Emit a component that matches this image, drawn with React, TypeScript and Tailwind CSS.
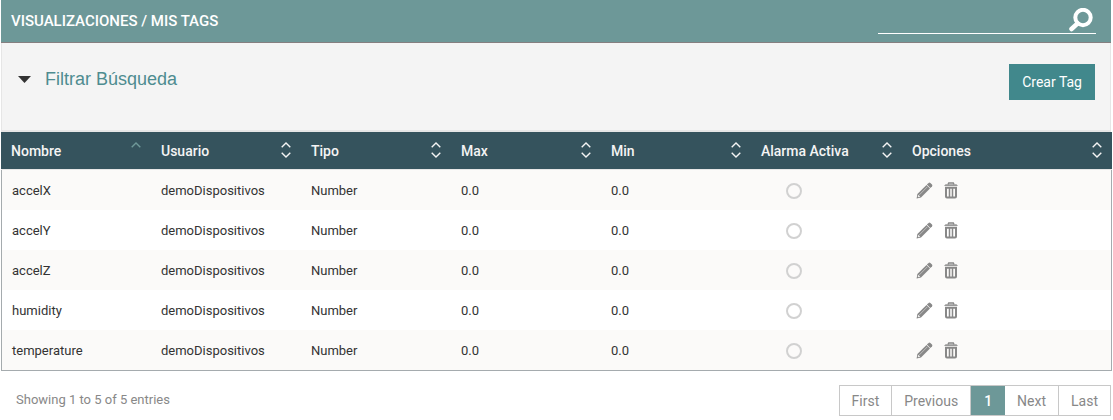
import { useState } from "react";

type Tag = { name: string; user: string; type: string; max: string; min: string };

const columns = ["Nombre", "Usuario", "Tipo", "Max", "Min", "Alarma Activa", "Opciones"];

const tags: Tag[] = ["accelX", "accelY", "accelZ", "humidity", "temperature"].map((name) => ({
  name,
  user: "demoDispositivos",
  type: "Number",
  max: "0.0",
  min: "0.0",
}));

function SearchIcon() {
  return (
    <svg viewBox="0 0 24 24" className="size-6" fill="none" stroke="currentColor" aria-hidden="true">
      <circle cx="14" cy="9.5" r="7.7" strokeWidth="4" />
      <path d="M8.5 15.5 2.5 21" strokeWidth="4.5" strokeLinecap="round" />
    </svg>
  );
}

function SortIcon({ ascending }: { ascending: boolean }) {
  return (
    <svg viewBox="0 0 10 18" className="h-[18px] w-[10px]" fill="none" strokeWidth="1.4" aria-hidden="true">
      <path d="M0.7 5.3 5 1l4.3 4.3" stroke={ascending ? "#6f9999" : "#f4f4f4"} />
      {!ascending && <path d="M0.7 10.7 5 15l4.3-4.3" stroke="#f4f4f4" />}
    </svg>
  );
}

function PencilIcon() {
  return (
    <svg viewBox="0 0 17 17" className="size-[17px]" fill="#888" aria-hidden="true">
      <path d="M0.6 16.4 1.4 12 10.5 3 14 6.5 5 15.6Z" />
      <path d="m10.9 2.6 1.7-1.7q.9-.7 1.8.1l1.6 1.6q.8.9 0 1.8l-1.7 1.7Z" />
      <path d="M3.3 12.9 11.5 4.7" stroke="#bdbdbd" strokeWidth="1" />
      <path d="m2.3 12.8 1.9 1.9-1.8.6-.7-.7Z" fill="#eee" />
    </svg>
  );
}

function TrashIcon() {
  return (
    <svg viewBox="0 0 14 17" className="h-[17px] w-[14px]" fill="none" stroke="#888" aria-hidden="true">
      <path d="M4 2.6 4.7 1h4.6l.7 1.6" strokeWidth="1.4" />
      <path d="M0 4 1.5 2.3h11L14 4Z" fill="#999" stroke="none" />
      <path d="M2 5.8v8.7q0 1 1 1h8q1 0 1-1V5.800Z" strokeWidth="2" />
      <path d="M5.5 6v9M8.5 6v9" strokeWidth="1.5" />
    </svg>
  );
}

export default function App() {
  const [query, setQuery] = useState("");
  const cell = "px-[10px] pt-[2px] pb-0";
  const iconCell = "px-[10px] py-0";
  const page = "h-full border-r border-[#c8c8c8] px-3 text-[#888]";

  return (
    <main className="bg-white px-px font-['Roboto',sans-serif] text-[13px] leading-5 text-[#333]">
      <header className="mr-px flex h-[43px] items-center justify-between border-b border-[#857f80] bg-[#6d9898] pr-[15px] pl-[10px] text-white">
        <h1 className="text-[15px] font-medium">VISUALIZACIONES / MIS TAGS</h1>
        <form className="flex h-[26px] w-[218px] items-center border-b border-white pr-[3px] pb-px" onSubmit={(e) => e.preventDefault()}>
          <input
            aria-label="Buscar"
            className="min-w-0 flex-1 bg-transparent px-1 outline-none"
            value={query}
            onChange={(e) => setQuery(e.target.value)}
          />
          <button type="submit" aria-label="Buscar">
            <SearchIcon />
          </button>
        </form>
      </header>

      <section className="mr-px flex h-[89px] items-start justify-between border-x border-b-2 border-[#e6e6e6] bg-[#f4f4f4] pt-[21px] pr-[15px] pl-4">
        <button type="button" className="flex h-[30px] items-center gap-[14px] font-['Liberation_Sans',sans-serif] text-lg text-[#4e8c90]">
          <svg viewBox="0 0 13 7" className="h-[7px] w-[13px]" fill="#333" aria-hidden="true">
            <path d="M0 0h13L6.5 7Z" />
          </svg>
          Filtrar Búsqueda
        </button>
        <button type="button" className="h-9 bg-[#41888c] px-[13px] text-sm text-white">
          Crear Tag
        </button>
      </section>

      <table className="w-full table-fixed border-separate border-spacing-0 text-left">
        <colgroup>
          <col className="w-[13.5%]" />
          <col className="w-[13.5%]" />
          <col className="w-[13.5%]" />
          <col className="w-[13.5%]" />
          <col className="w-[13.5%]" />
          <col className="w-[13.6%]" />
          <col />
        </colgroup>
        <thead>
          <tr className="h-[38px] bg-[#35535d] text-[#f4f4f4]">
            {columns.map((label, i) => (
              <th key={label} aria-sort={i === 0 ? "ascending" : "none"} className="border-b border-[#e6e6e6] px-[10px] py-0 text-sm font-medium">
                <button type="button" className="flex w-full items-center justify-between">
                  {label}
                  <SortIcon ascending={i === 0} />
                </button>
              </th>
            ))}
          </tr>
        </thead>
        <tbody>
          {tags.map((tag, i) => (
            <tr
              key={tag.name}
              className="h-10 last:h-[41px] odd:bg-[#fbfaf9] [&>td:first-child]:border-l [&>td:last-child]:border-r last:[&>td]:border-b [&>td]:border-[#a5abae]"
            >
              <td className={cell}>{tag.name}</td>
              <td className={cell}>{tag.user}</td>
              <td className={cell}>{tag.type}</td>
              <td className={cell}>{tag.max}</td>
              <td className={cell}>{tag.min}</td>
              <td className={cell}>
                <input
                  type="radio"
                  name={`alarm-${i}`}
                  aria-label={`Alarma activa ${tag.name}`}
                  className="ml-[25px] block size-4 appearance-none rounded-full border-2 border-[#d1d1d1] checked:bg-[#6d9898]"
                />
              </td>
              <td className={iconCell}>
                <div className="flex items-center gap-[11px] pl-1">
                  <button type="button" aria-label={`Editar ${tag.name}`}>
                    <PencilIcon />
                  </button>
                  <button type="button" aria-label={`Eliminar ${tag.name}`}>
                    <TrashIcon />
                  </button>
                </div>
              </td>
            </tr>
          ))}
        </tbody>
      </table>

      <footer className="flex items-start justify-between pt-[14px] pr-px pl-[15px]">
        <p className="pt-[5px] text-[#888]">Showing 1 to 5 of 5 entries</p>
        <nav aria-label="Paginación" className="flex h-[31px] border border-r-0 border-[#c8c8c8] text-sm">
          <button type="button" className={page}>First</button>
          <button type="button" className={page}>Previous</button>
          <button type="button" aria-current="page" className="h-full bg-[#6d9898] px-[13px] font-medium text-white">1</button>
          <button type="button" className={page}>Next</button>
          <button type="button" className={page}>Last</button>
        </nav>
      </footer>
    </main>
  );
}
